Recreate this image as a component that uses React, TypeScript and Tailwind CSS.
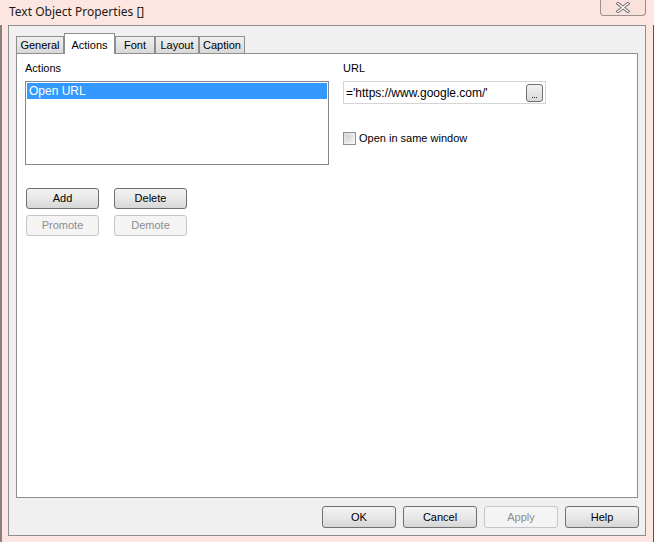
import React from "react";

const font = { fontFamily: '"Liberation Sans", Arial, sans-serif' };

function Btn({ label, disabled, className = "" }: { label: string; disabled?: boolean; className?: string }) {
  return (
    <div
      className={
        "flex items-center justify-center rounded-[3px] border text-[11px] " +
        (disabled
          ? "border-[#c4c7ca] bg-[#f4f4f4] text-[#8d8d8d] "
          : "border-[#707070] bg-gradient-to-b from-[#f3f3f3] via-[#e8e8e8] to-[#d6d6d6] text-black ") +
        className
      }
    >
      {label}
    </div>
  );
}

const tabs = [
  { name: "General", w: "w-[48px]" },
  { name: "Actions", w: "w-[51px]", active: true },
  { name: "Font", w: "w-[40px]" },
  { name: "Layout", w: "w-[44px]" },
  { name: "Caption", w: "w-[46px]" },
];

export default function App() {
  return (
    <div className="w-[654px] h-[542px] bg-[#fde6e1] flex flex-col overflow-hidden" style={font}>
      {/* title bar */}
      <div className="h-[25px] flex items-start shrink-0">
        <div
          className="pl-[9px] pt-[3px] text-[12px] text-[#1a1a1a]"
          style={{ fontFamily: '"Noto Sans", "Open Sans", sans-serif' }}
        >
          Text Object Properties []
        </div>
        <div className="flex-1" />
        <div className="w-[46px] h-[16px] mr-[8px] rounded-b-[4px] border border-t-0 border-[#9a8f8e] bg-[#fbe1dc] flex items-center justify-center">
          <svg width="14" height="11" viewBox="0 0 14 11">
            <path d="M2 1.5 L12 9.5 M12 1.5 L2 9.5" stroke="#6d6d6d" strokeWidth="3.2" strokeLinecap="square" />
            <path d="M2 1.5 L12 9.5 M12 1.5 L2 9.5" stroke="#ffffff" strokeWidth="1.4" strokeLinecap="square" />
          </svg>
        </div>
      </div>

      <div className="flex flex-1 min-h-0">
        {/* left frame */}
        <div className="w-[8px] border-l-2 border-[#8a8080]" />
        {/* client */}
        <div className="w-[638px] h-[511px] border border-[#8e8e8e] bg-[#f0f0f0] flex flex-col pt-[7px] px-[7px] pb-[7px]">
          <div className="flex items-end h-[20px]">
            {tabs.map((t) =>
              t.active ? (
                <div
                  key={t.name}
                  className={t.w + " h-[21px] -mb-px z-10 bg-white border border-b-0 border-[#8e8e8e] text-[11px] flex items-start justify-center pt-[3px]"}
                >
                  {t.name}
                </div>
              ) : (
                <div
                  key={t.name}
                  className={t.w + " h-[17px] bg-gradient-to-b from-[#f0f0f0] to-[#d9d9d9] border border-b-0 border-[#8e8e8e] text-[11px] flex items-center justify-center"}
                >
                  {t.name}
                </div>
              )
            )}
          </div>
          <div className="h-[445px] bg-white border border-[#8e8e8e] pl-[8px] pt-[6px]">
            <div className="flex">
              <div className="w-[304px] flex flex-col">
                <div className="text-[11px] h-[21px]">Actions</div>
                <div className="h-[84px] border border-[#828790] p-[1px]">
                  <div className="h-[16px] bg-[#3399ff] text-white text-[12px] leading-[16px] pl-[2px]">Open URL</div>
                </div>
                <div className="flex gap-[15px] mt-[23px] pl-px">
                  <Btn label="Add" className="w-[73px] h-[21px]" />
                  <Btn label="Delete" className="w-[73px] h-[21px]" />
                </div>
                <div className="flex gap-[15px] mt-[6px] pl-px">
                  <Btn label="Promote" disabled className="w-[73px] h-[21px]" />
                  <Btn label="Demote" disabled className="w-[73px] h-[21px]" />
                </div>
              </div>
              <div className="ml-[14px] flex flex-col">
                <div className="text-[11px] h-[21px]">URL</div>
                <div className="w-[203px] h-[23px] border border-[#d5d5d5] flex items-center pl-[2px] pr-[2px]">
                  <div className="flex-1 text-[12px]">='https://www.google.com/'</div>
                  <div className="w-[17px] h-[18px] rounded-[3px] border border-[#707070] bg-gradient-to-b from-[#f3f3f3] to-[#d9d9d9] flex items-end justify-center pb-[3px]">
                    <div className="flex gap-[1px]">
                      <div className="w-px h-px bg-[#333]" />
                      <div className="w-px h-px bg-[#333]" />
                      <div className="w-px h-px bg-[#333]" />
                    </div>
                  </div>
                </div>
                <div className="flex items-center mt-[26px] gap-[3px]">
                  <div className="w-[13px] h-[13px] border border-[#8f8f8f] bg-gradient-to-br from-[#dcdcdc] to-[#f8f8f8] p-[2px]">
                    <div className="w-full h-full bg-gradient-to-br from-[#cfcfcf] to-[#f0f0f0]" />
                  </div>
                  <div className="text-[11px]">Open in same window</div>
                </div>
              </div>
            </div>
          </div>
          <div className="flex justify-end gap-[7px] mt-[8px] -mr-px">
            <Btn label="OK" className="w-[74px] h-[22px]" />
            <Btn label="Cancel" className="w-[74px] h-[22px]" />
            <Btn label="Apply" disabled className="w-[74px] h-[22px]" />
            <Btn label="Help" className="w-[74px] h-[22px]" />
          </div>
        </div>
        <div className="flex-1 border-r border-[#5a5050]" />
      </div>
    </div>
  );
}
